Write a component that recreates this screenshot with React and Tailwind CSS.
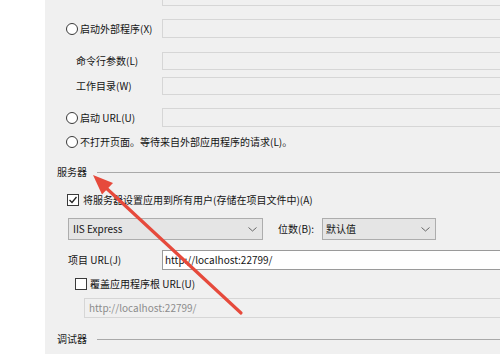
import React from 'react';

const Radio = () => (
  <span className="w-[12px] h-[12px] rounded-full border border-[#3a3a3a] bg-white shrink-0" />
);

const Check = ({ checked }) => (
  <span className="w-[12px] h-[12px] border border-[#3a3a3a] bg-white shrink-0 flex items-center justify-center">
    {checked && (
      <svg width="10" height="10" viewBox="0 0 10 10">
        <polyline points="1.5,5 4,7.5 8.5,2" fill="none" stroke="#222" strokeWidth="1.3" />
      </svg>
    )}
  </span>
);

const Box = ({ className = '' }) => (
  <div className={`flex-1 self-stretch -mr-[3px] border border-[#d6d6d6] bg-[#f0f0f0] ${className}`} />
);

const Chevron = () => (
  <svg width="9" height="5" viewBox="0 0 9 5" className="shrink-0">
    <polyline points="0.5,0.5 4.5,4 8.5,0.5" fill="none" stroke="#666" strokeWidth="1" />
  </svg>
);

const Section = ({ title, className = '' }) => (
  <div className={`flex items-center ${className}`}>
    <span className="w-[40px] pl-[12px] shrink-0 text-[#1a1a1a] box-content">{title}</span>
    <div className="flex-1 h-px bg-[#a9a9a9]" />
  </div>
);

export default function App() {
  return (
    <div className="relative w-[500px] h-[354px] overflow-hidden flex bg-white text-[10px] leading-none text-[#141414] font-['Noto_Sans_CJK_SC','Microsoft_YaHei',sans-serif]">
      <div className="w-[45px] shrink-0 bg-white" />

      <div className="flex-1 bg-[#f0f0f0] flex flex-col">
        {/* Start action */}
        <div className="-mt-[18px] h-[24px] flex items-center pl-[21px]">
          <div className="w-[96px] flex items-center gap-[2px] shrink-0">
            <Radio />
            <span>特定页(S)</span>
          </div>
          <Box />
        </div>

        <div className="mt-[13px] h-[19px] flex items-center pl-[21px]">
          <div className="w-[96px] flex items-center gap-[2px] shrink-0">
            <Radio />
            <span>启动外部程序(X)</span>
          </div>
          <Box />
        </div>

        <div className="mt-[14px] h-[18px] flex items-center pl-[31px]">
          <span className="w-[86px] shrink-0">命令行参数(L)</span>
          <Box />
        </div>

        <div className="mt-[7px] h-[18px] flex items-center pl-[31px]">
          <span className="w-[86px] shrink-0">工作目录(W)</span>
          <Box />
        </div>

        <div className="mt-[13px] h-[19px] flex items-center pl-[21px]">
          <div className="w-[96px] flex items-center gap-[2px] shrink-0">
            <Radio />
            <span>启动 URL(U)</span>
          </div>
          <Box />
        </div>

        <div className="h-[30px] flex items-center pl-[21px] gap-[2px]">
          <Radio />
          <span>不打开页面。等待来自外部应用程序的请求(L)。</span>
        </div>

        {/* Server */}
        <Section title="服务器" className="h-[30px]" />

        <div className="h-[26px] flex items-center pl-[22px] gap-[4px]">
          <Check checked />
          <span>将服务器设置应用到所有用户(存储在项目文件中)(A)</span>
        </div>

        <div className="mt-[5px] h-[22px] flex items-center pl-[23px]">
          <div className="w-[195px] h-full border border-[#adadad] bg-[#e5e5e5] flex items-center justify-between pl-[4px] pr-[5px]">
            <span>IIS Express</span>
            <Chevron />
          </div>
          <span className="ml-[15px] w-[44px]">位数(B):</span>
          <div className="w-[114px] h-full border border-[#adadad] bg-[#e5e5e5] flex items-center justify-between pl-[3px] pr-[5px]">
            <span>默认值</span>
            <Chevron />
          </div>
        </div>

        <div className="mt-[10px] h-[20px] flex items-center pl-[23px]">
          <span className="w-[94px] shrink-0">项目 URL(J)</span>
          <div className="flex-1 h-full -mr-[3px] border border-[#9a9a9a] bg-white flex items-center pl-[2px]">
            http://localhost:22799/
          </div>
        </div>

        <div className="h-[28px] flex items-center pl-[30px] gap-[3px]">
          <Check />
          <span>覆盖应用程序根 URL(U)</span>
        </div>

        <div className="h-[20px] flex items-center pl-[39px]">
          <div className="flex-1 h-full -mr-[3px] border border-[#d6d6d6] bg-[#f0f0f0] flex items-center pl-[4px] text-[#8c8c8c]">
            http://localhost:22799/
          </div>
        </div>

        {/* Debugger */}
        <Section title="调试器" className="mt-[10px] h-[22px]" />
      </div>

      <svg className="absolute left-0 top-0 pointer-events-none" width="500" height="354" viewBox="0 0 500 354">
        <line x1="241" y1="313" x2="104" y2="186" stroke="#e64a3c" strokeWidth="3.2" strokeLinecap="round" />
        <polygon points="93,175 113,183 102,194.5" fill="#e64a3c" />
      </svg>
    </div>
  );
}
